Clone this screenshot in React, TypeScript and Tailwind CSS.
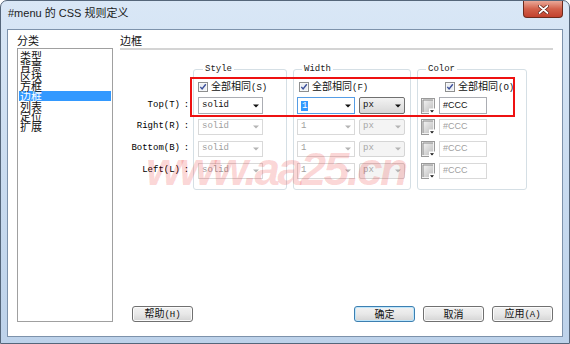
import React from "react";

const mono = "font-['Liberation_Mono','Noto_Sans_CJK_SC',monospace]";
const cjk = "font-['Noto_Sans_CJK_SC',sans-serif]";

const cats = ["类型", "背景", "区块", "方框", "边框", "列表", "定位", "扩展"];

const sides = [
  { label: "Top(T)", on: true, h: "h-[17px]", mt: "mt-[4px]" },
  { label: "Right(R)", on: false, h: "h-[16px]", mt: "mt-[5px]" },
  { label: "Bottom(B)", on: false, h: "h-[16px]", mt: "mt-[6px]" },
  { label: "Left(L)", on: false, h: "h-[16px]", mt: "mt-[6px]" },
];

function Arrow({ on }: { on: boolean }) {
  return (
    <svg width="6" height="4" viewBox="0 0 6 4" className="shrink-0">
      <path d="M0 0.5H6L3 3.6Z" fill={on ? "#111" : "#b4b4b4"} />
    </svg>
  );
}

function Check() {
  return (
    <svg width="10" height="10" viewBox="0 0 10 10" className="shrink-0">
      <rect x="0.5" y="0.5" width="9" height="9" fill="#fff" stroke="#8e8f8f" />
      <rect x="1.5" y="1.5" width="7" height="7" fill="#eceff3" />
      <path d="M2.3 4.9 4.1 7 7.8 2.3" fill="none" stroke="#3b4f9a" strokeWidth="1.4" />
    </svg>
  );
}

function Swatch() {
  return (
    <svg width="14" height="16" viewBox="0 0 14 16" className="shrink-0">
      <defs>
        <linearGradient id="sw" x1="0" y1="0" x2="1" y2="1">
          <stop offset="0" stopColor="#f4f4f4" />
          <stop offset="1" stopColor="#bdbdbd" />
        </linearGradient>
      </defs>
      <rect x="0.5" y="0.5" width="13" height="15" fill="#f2f2f2" stroke="#9a9a9a" />
      <rect x="2" y="2" width="10" height="12" fill="url(#sw)" />
      <path d="M2 2H12M2 2V14" stroke="#8a8a8a" strokeWidth="1" />
      <rect x="8" y="10.5" width="6" height="5.5" fill="#fff" />
      <path d="M9 12.3H13L11 14.5Z" fill="#111" />
    </svg>
  );
}

function Drop({
  text,
  on,
  kind,
  cls,
}: {
  text: string;
  on: boolean;
  kind: "edit" | "btn" | "focus";
  cls: string;
}) {
  let look = "border-[#d9d9d9] bg-white text-[#a0a0a0]";
  if (kind === "btn") {
    look = on
      ? "border-[#707070] bg-gradient-to-b from-[#f3f3f3] to-[#d8d8d8] text-[#111] rounded-[2px]"
      : "border-[#d5d5d5] bg-[#f4f4f4] text-[#a8a8a8] rounded-[2px]";
  } else if (on) {
    look = kind === "focus" ? "border-[#569de5] bg-white text-[#111]" : "border-[#abadb3] bg-white text-[#111]";
  }
  return (
    <div className={`${cls} ${look} flex items-center justify-between border pl-[3px] pr-[3px] text-[9px] ${mono}`}>
      {kind === "focus" ? (
        <span className="bg-[#3399ff] px-[1px] leading-[10px] text-white">{text}</span>
      ) : (
        <span>{text}</span>
      )}
      <Arrow on={on} />
    </div>
  );
}

function Btn({ children, def, cls }: { children: React.ReactNode; def?: boolean; cls?: string }) {
  return (
    <div
      className={`${cls ?? ""} flex h-[16px] w-[61px] items-center justify-center rounded-[3px] border bg-gradient-to-b from-[#f2f2f2] via-[#e8e8e8] to-[#d4d4d4] text-[10px] leading-[12px] text-[#111] ${cjk} ${
        def ? "border-[#3c7fb1] shadow-[inset_0_0_0_1px_#bfe6fb]" : "border-[#707070] shadow-[inset_0_0_0_1px_#fbfbfb]"
      }`}
    >
      <span>{children}</span>
    </div>
  );
}

function Same({ k }: { k: string }) {
  return (
    <span className={`text-[10px] leading-[12px] text-[#111] ${cjk}`}>
      全部相同<span className={`text-[9px] ${mono}`}>({k})</span>
    </span>
  );
}

export default function App() {
  return (
    <div className="relative h-[344px] w-[570px] overflow-hidden bg-white">
      <div className="flex h-full w-full flex-col rounded-t-[7px] border border-[#55667a] bg-gradient-to-b from-[#d9e7f6] via-[#cadcf0] to-[#bdd2ea]">
        <div className="flex h-[28px] shrink-0 items-start justify-between">
          <span className={`pl-[7px] pt-[5px] text-[11px] leading-[14px] text-[#1b1b1b] font-['Liberation_Sans','Noto_Sans_CJK_SC',sans-serif]`}>
            #menu 的 CSS 规则定义
          </span>
          <div className="mr-[6px] flex h-[17px] w-[40px] items-center justify-center rounded-b-[4px] border border-t-0 border-[#6d2a1c] bg-gradient-to-b from-[#e9a898] via-[#d2604a] to-[#c2412d]">
            <svg width="11" height="9" viewBox="0 0 11 9">
              <path d="M1.5 1 9.5 8M9.5 1 1.5 8" stroke="#5a1a10" strokeWidth="3.2" strokeLinecap="round" />
              <path d="M1.5 1 9.5 8M9.5 1 1.5 8" stroke="#fff" strokeWidth="1.8" strokeLinecap="round" />
            </svg>
          </div>
        </div>

        <div className="mx-[6px] mb-[6px] flex flex-1 border border-[#7d92ab] bg-white pb-[14px] pl-[9px] pr-[9px]">
          <div className="flex w-[96px] shrink-0 flex-col pt-[4px]">
            <div className={`text-[11px] leading-[12px] text-[#111] ${cjk}`}>分类</div>
            <div className="mt-[2px] flex-1 border border-[#a0a0a0] bg-white pt-[2px]">
              {cats.map((c) => (
                <div
                  key={c}
                  className={`mx-[1px] h-[10px] pl-[1px] text-[11px] leading-[10px] ${cjk} ${
                    c === "边框" ? "bg-[#3399ff] text-white" : "text-[#111]"
                  }`}
                >
                  {c}
                </div>
              ))}
            </div>
          </div>

          <div className="ml-[7px] flex flex-1 flex-col pt-[4px]">
            <div className={`border-b-2 border-[#d4d4d4] pb-[2px] text-[11px] leading-[12px] text-[#111] ${cjk}`}>边框</div>

            <div className="mt-[14px] flex">
              <div className={`w-[73px] shrink-0 pt-[29px] text-[9px] text-[#000] ${mono}`}>
                {sides.map((s) => (
                  <div key={s.label} className={`${s.mt} ${s.h} flex items-center justify-end`}>
                    <span>{s.label}</span>
                    <span className="w-[13px] text-center">:</span>
                  </div>
                ))}
              </div>

              <fieldset className="w-[94px] shrink-0 rounded-[3px] border border-[#d5dfe5] pb-[10px] pl-[4px] pt-[7px]">
                <legend className={`ml-[5px] px-[2px] text-[9px] leading-[10px] text-[#222] ${mono}`}>Style</legend>
                <div className="flex h-[12px] items-center gap-[3px]">
                  <Check />
                  <Same k="S" />
                </div>
                {sides.map((s) => (
                  <Drop key={s.label} text="solid" on={s.on} kind="edit" cls={`${s.mt} ${s.h} w-[65px]`} />
                ))}
              </fieldset>

              <fieldset className="ml-[6px] w-[118px] shrink-0 rounded-[3px] border border-[#d5dfe5] pb-[10px] pl-[3px] pt-[7px]">
                <legend className={`ml-[5px] px-[2px] text-[9px] leading-[10px] text-[#222] ${mono}`}>Width</legend>
                <div className="ml-[2px] flex h-[12px] items-center gap-[3px]">
                  <Check />
                  <Same k="F" />
                </div>
                {sides.map((s) => (
                  <div key={s.label} className={`${s.mt} ${s.h} flex gap-[4px]`}>
                    <Drop text="1" on={s.on} kind={s.on ? "focus" : "edit"} cls="h-full w-[58px]" />
                    <Drop text="px" on={s.on} kind="btn" cls="h-full w-[46px]" />
                  </div>
                ))}
              </fieldset>

              <fieldset className="ml-[6px] w-[110px] shrink-0 rounded-[3px] border border-[#d5dfe5] pb-[10px] pl-[3px] pt-[7px]">
                <legend className={`ml-[5px] px-[2px] text-[9px] leading-[10px] text-[#222] ${mono}`}>Color</legend>
                <div className="ml-[24px] flex h-[12px] items-center gap-[3px]">
                  <Check />
                  <Same k="O" />
                </div>
                {sides.map((s) => (
                  <div key={s.label} className={`${s.mt} ${s.h} flex items-center gap-[4px]`}>
                    <Swatch />
                    <div
                      className={`flex h-full w-[48px] items-center border bg-white pl-[3px] text-[9px] font-['Liberation_Sans',sans-serif] ${
                        s.on ? "border-[#abadb3] text-[#111]" : "border-[#d9d9d9] text-[#a0a0a0]"
                      }`}
                    >
                      #CCC
                    </div>
                  </div>
                ))}
              </fieldset>
            </div>

            <div className="mt-auto flex">
              <Btn cls="ml-[12px]">
                帮助<span className={`text-[9px] ${mono}`}>(H)</span>
              </Btn>
              <div className="ml-auto flex gap-[8px]">
                <Btn def>确定</Btn>
                <Btn>取消</Btn>
                <Btn>
                  应用<span className={`text-[9px] ${mono}`}>(A)</span>
                </Btn>
              </div>
            </div>
          </div>
        </div>
      </div>

      <div className="pointer-events-none absolute left-[190px] top-[77px] h-[40px] w-[325px] border-2 border-[#ee1111]" />

      <div className="pointer-events-none absolute left-[146px] top-[146px] whitespace-nowrap font-['Liberation_Sans',sans-serif] text-[46px] font-bold italic leading-none tracking-[-2.5px] text-[rgba(230,0,0,0.17)]">
        www.aa25.cn
      </div>
    </div>
  );
}
